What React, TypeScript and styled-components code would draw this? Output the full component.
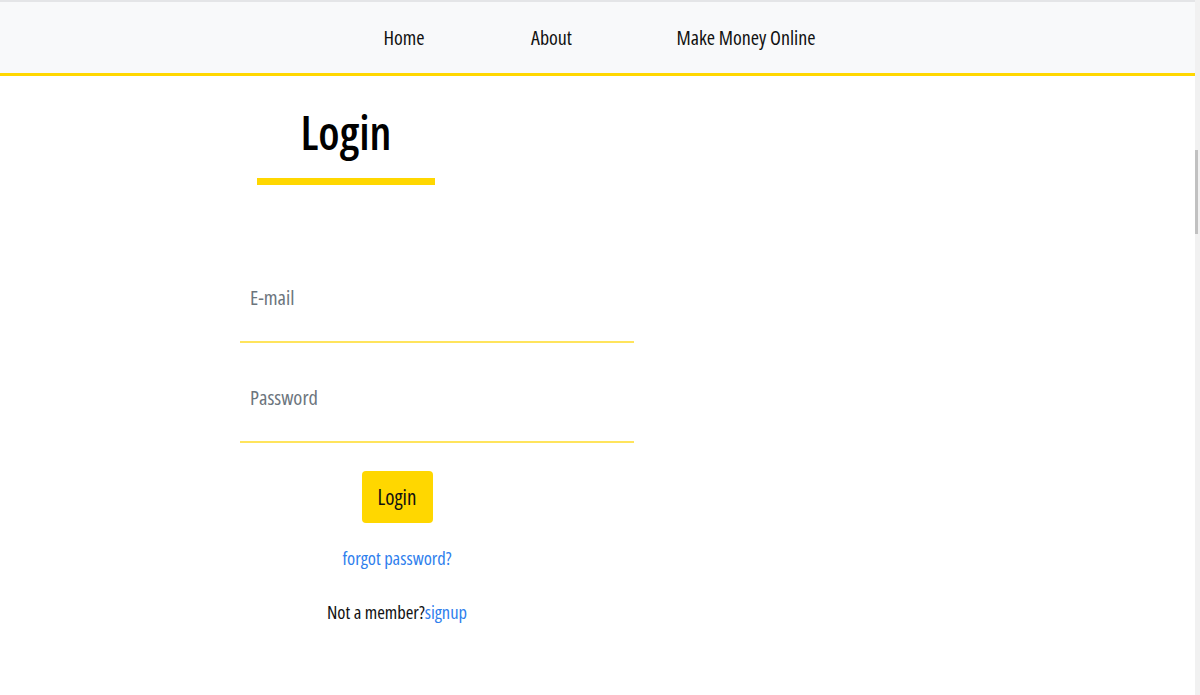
import React from "react";
import styled, { createGlobalStyle } from "styled-components";

const GlobalStyle = createGlobalStyle`
  html, body { margin: 0; padding: 0; background: #ffffff; }
  body {
    font-family: "Open Sans", "DejaVu Sans Condensed", sans-serif;
    font-stretch: 75%;
    color: #212529;
    overflow: hidden;
  }
  * { box-sizing: border-box; }
`;

const Page = styled.div`
  width: 1200px;
  height: 695px;
  display: flex;
  background: #fff;
`;

const Main = styled.div`
  flex: 1;
  display: flex;
  flex-direction: column;
`;

const ScrollTrack = styled.div`
  width: 5px;
  background: #f1f1f1;
  display: flex;
  flex-direction: column;
  padding-top: 150px;
`;

const ScrollThumb = styled.div`
  width: 3px;
  height: 84px;
  background: #c1c1c1;
`;

const NavBar = styled.nav`
  height: 76px;
  background: #f8f9fa;
  border-top: 2px solid #e4e5e7;
  border-bottom: 3px solid #ffd700;
  display: flex;
  align-items: center;
  justify-content: center;
  padding-left: 2px;
`;

const NavLink = styled.a<{ $w: number }>`
  width: ${(p) => p.$w}px;
  text-align: center;
  font-size: 20px;
  color: #111;
  text-decoration: none;
`;

const Content = styled.div`
  padding-left: 240px;
  display: flex;
  flex-direction: column;
`;

const TitleBlock = styled.div`
  margin-left: 17px;
  width: 178px;
  display: flex;
  flex-direction: column;
  align-items: center;
  padding-top: 26px;
`;

const Title = styled.h1`
  margin: 0;
  font-size: 46px;
  font-weight: 600;
  line-height: 60px;
  color: #000;
`;

const TitleBar = styled.div`
  width: 178px;
  height: 7px;
  margin-top: 16px;
  background: #ffd700;
`;

const Form = styled.form`
  width: 394px;
  margin-top: 82px;
  display: flex;
  flex-direction: column;
  gap: 24px;
`;

const Field = styled.input`
  width: 394px;
  height: 76px;
  border: none;
  border-bottom: 2px solid #ffe45c;
  outline: none;
  background: transparent;
  padding: 0 10px 14px;
  font-family: inherit;
  font-stretch: inherit;
  font-size: 20.5px;
  color: #212529;
  &::placeholder { color: #6c757d; }
`;

const Actions = styled.div`
  width: 314px;
  display: flex;
  flex-direction: column;
  align-items: center;
  margin-top: 4px;
`;

const SubmitButton = styled.button`
  width: 71px;
  height: 52px;
  border: none;
  border-radius: 4px;
  background: #ffd700;
  color: #111;
  font-family: inherit;
  font-stretch: inherit;
  font-size: 21px;
  padding: 0;
`;

const LinkText = styled.a`
  color: #2f80ed;
  text-decoration: none;
`;

const Line = styled.div<{ $top: number }>`
  margin-top: ${(p) => p.$top}px;
  font-size: 18.5px;
  color: #111;
`;

export default function App() {
  return (
    <>
      <GlobalStyle />
      <Page>
        <Main>
          <NavBar>
            <NavLink $w={145} href="#">Home</NavLink>
            <NavLink $w={150} href="#">About</NavLink>
            <NavLink $w={239} href="#">Make Money Online</NavLink>
          </NavBar>
          <Content>
            <TitleBlock>
              <Title>Login</Title>
              <TitleBar />
            </TitleBlock>
            <Form onSubmit={(e) => e.preventDefault()}>
              <Field type="email" placeholder="E-mail" />
              <Field type="password" placeholder="Password" />
              <Actions>
                <SubmitButton type="submit">Login</SubmitButton>
                <Line $top={22}>
                  <LinkText href="#">forgot password?</LinkText>
                </Line>
                <Line $top={29}>
                  Not a member?<LinkText href="#">signup</LinkText>
                </Line>
              </Actions>
            </Form>
          </Content>
        </Main>
        <ScrollTrack>
          <ScrollThumb />
        </ScrollTrack>
      </Page>
    </>
  );
}
